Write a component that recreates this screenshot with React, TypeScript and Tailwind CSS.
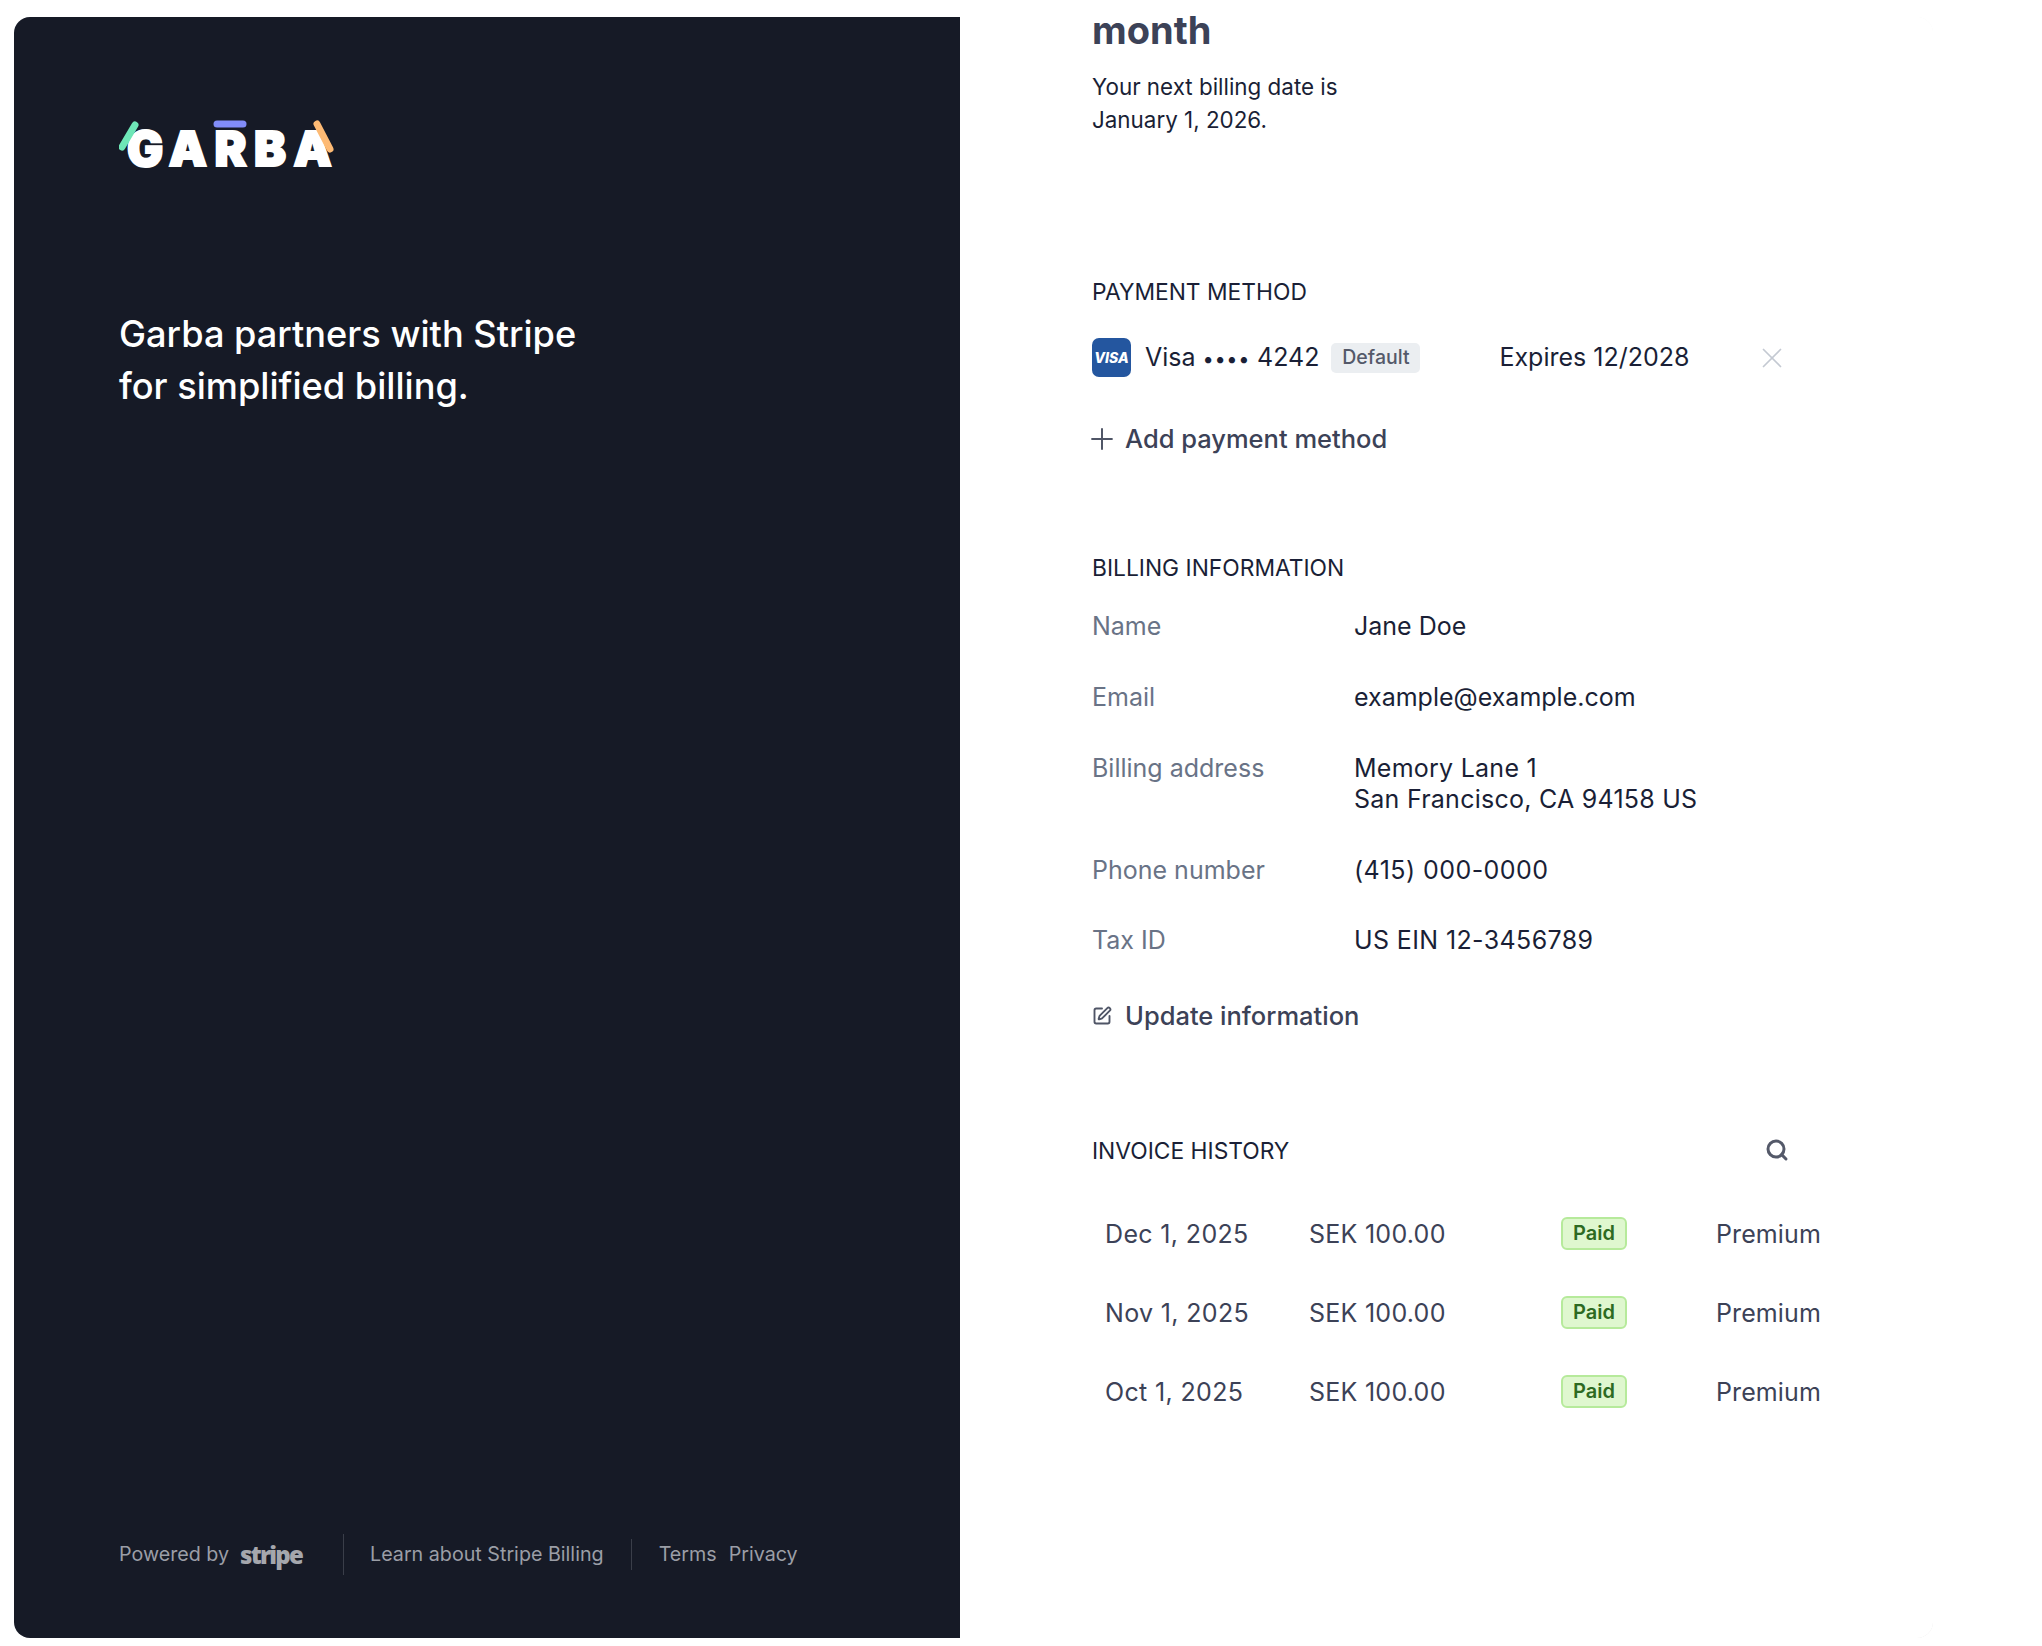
import { Plus, X, Search, SquarePen } from "lucide-react";

const font = "font-['Inter',sans-serif]";

const billing = [
  { label: "Name", value: ["Jane Doe"], spacing: "" },
  { label: "Email", value: ["example@example.com"], spacing: "" },
  { label: "Billing address", value: ["Memory Lane 1", "San Francisco, CA 94158 US"], spacing: "tracking-[0.25px]" },
  { label: "Phone number", value: ["(415) 000-0000"], spacing: "tracking-[0.45px]" },
  { label: "Tax ID", value: ["US EIN 12-3456789"], spacing: "tracking-[0.38px]" },
];

const invoices = ["Dec 1, 2025", "Nov 1, 2025", "Oct 1, 2025"];

function Logo() {
  return (
    <div className="relative h-[60px] w-[230px]">
      <span className="absolute left-[8px] top-[7px] font-['Inter',sans-serif] text-[48px] leading-[48px] font-black tracking-[7.5px] text-white [-webkit-text-stroke:2px_white]">
        GARBA
      </span>
      <svg className="absolute left-0 top-0" width="230" height="60" fill="none" strokeLinecap="round" strokeWidth="7">
        <path d="M16 7 L3 29" stroke="#6ee7b7" />
        <path d="M98 6 L124 6" stroke="#818cf8" />
        <path d="M198 6 L211 31" stroke="#fdba74" />
      </svg>
    </div>
  );
}

function SectionTitle({ children }: { children: React.ReactNode }) {
  return <h2 className="text-[22.8px] leading-[30px] text-[#1a1f36]">{children}</h2>;
}

export default function App() {
  return (
    <div className={`${font} h-[1646px] w-[2042px] overflow-hidden bg-white pl-[14px] pt-[17px]`}>
      <div className="h-[1621px] w-[1919px] rounded-2xl bg-gradient-to-b from-[#f7f7f7] to-[#e2e2e2]">
        <div className="flex h-full rounded-2xl bg-white">
          <div className="flex w-[946px] shrink-0 flex-col rounded-l-2xl bg-[#161a26] pl-[105px] pb-[63px] pt-[101px]">
            <Logo />
            <p className="mt-[130px] text-[36.2px] leading-[52px] font-medium text-white">
              Garba partners with Stripe
              <br />
              for simplified billing.
            </p>
            <div className="mt-auto flex items-center text-[19.7px] text-[#9b9ea6]">
              <span>Powered by</span>
              <span className="ml-[11px] font-['Open_Sans',sans-serif] text-[24px] leading-[32px] font-extrabold tracking-[-1.8px] text-[#a5a7ad]">
                stripe
              </span>
              <div className="ml-[41px] h-[41px] w-px bg-[#3a3e49]" />
              <span className="ml-[26px]">Learn about Stripe Billing</span>
              <div className="ml-[27px] h-[31px] w-px bg-[#3a3e49]" />
              <span className="ml-[27px]">Terms</span>
              <span className="ml-[12px]">Privacy</span>
            </div>
          </div>

          <div className="w-[973px] pl-[132px] text-[25px] text-[#1a1f36]">
            <h1 className="mt-[-8px] text-[38px] leading-[42px] font-bold text-[#3c4257]">month</h1>
            <p className="mt-[19px] text-[22.4px] leading-[33px]">
              Your next billing date is
              <br />
              January 1, 2026.
            </p>

            <div className="mt-[141px]">
              <SectionTitle>PAYMENT METHOD</SectionTitle>
              <div className="mt-[31px] flex h-[39px] items-center">
                <div className="flex h-[39px] w-[39px] items-center justify-center rounded-[7px] bg-[#24569f] text-[14px] font-extrabold text-white italic">
                  VISA
                </div>
                <span className="ml-[14px]">
                  Visa <span className="text-[20px] tracking-[0.6px]">••••</span> 4242
                </span>
                <span className="ml-[12px] flex h-[30px] w-[89px] items-center justify-center rounded-[5px] bg-[#ebeef1] text-[19.5px] font-medium text-[#545969]">
                  Default
                </span>
                <span className="ml-[79px]">Expires 12/2028</span>
                <X className="ml-[66px] text-[#c4c9d2]" size={34} strokeWidth={1.2} />
              </div>
              <div className="mt-[43px] flex items-center text-[25.5px] font-medium text-[#3c4257]">
                <Plus size={34} strokeWidth={1.4} className="-ml-[7px] text-[#4f5566]" />
                <span className="ml-[6px]">Add payment method</span>
              </div>
            </div>

            <div className="mt-[95px]">
              <SectionTitle>BILLING INFORMATION</SectionTitle>
              <div className="mt-[28px] flex flex-col gap-[39.75px]">
                {billing.map((row) => (
                  <div key={row.label} className="grid grid-cols-[262px_1fr] leading-[31px]">
                    <span className="text-[#697386]">{row.label}</span>
                    <div className={row.spacing}>
                      {row.value.map((line) => (
                        <div key={line}>{line}</div>
                      ))}
                    </div>
                  </div>
                ))}
              </div>
              <div className="mt-[41px] flex items-center text-[25.5px] font-medium text-[#3c4257]">
                <SquarePen size={20} strokeWidth={2.25} className="text-[#4f5566]" />
                <span className="ml-[13px]">Update information</span>
              </div>
            </div>

            <div className="mt-[100px]">
              <div className="relative">
                <SectionTitle>INVOICE HISTORY</SectionTitle>
                <Search size={24} strokeWidth={3} className="absolute left-[673px] top-[2px] text-[#545969]" />
              </div>
              <div className="mt-[51px] flex flex-col gap-[44px]">
                {invoices.map((date) => (
                  <div key={date} className="grid grid-cols-[204px_252px_155px_1fr] items-center pl-[13px] leading-[31px] text-[#3c4257]">
                    <span className="tracking-[0.35px]">{date}</span>
                    <span className="tracking-[0.26px]">SEK 100.00</span>
                    <span className="mb-[2px] flex h-[33px] w-[66px] items-center justify-center rounded-[6px] border-2 border-[#b6ea9b] bg-[#dff7cf] text-[20px] font-semibold text-[#2d6a22]">
                      Paid
                    </span>
                    <span className="tracking-[0.1px]">Premium</span>
                  </div>
                ))}
              </div>
            </div>
          </div>
        </div>
      </div>
    </div>
  );
}
